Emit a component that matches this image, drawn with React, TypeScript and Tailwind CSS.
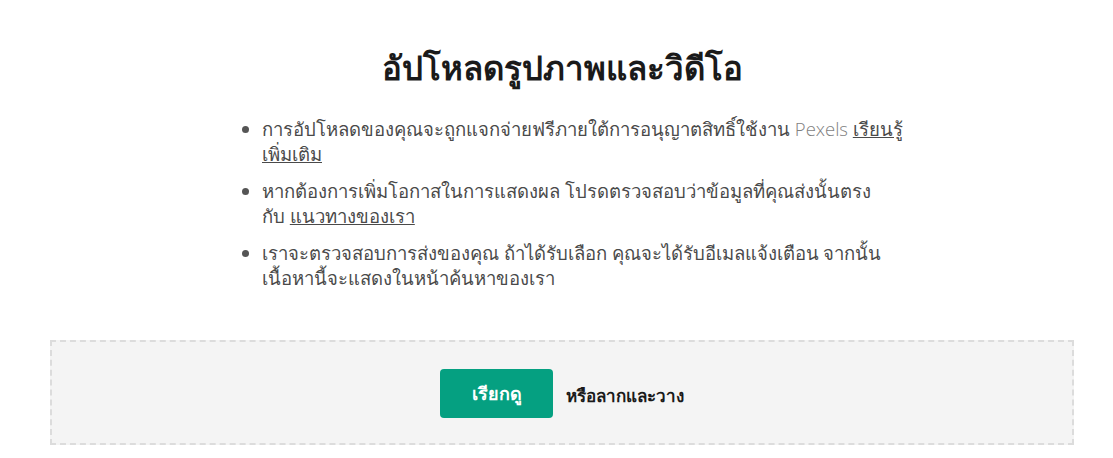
const font = { fontFamily: '"Open Sans", "Noto Sans", "DejaVu Sans", sans-serif' };

export default function App() {
  return (
    <div className="min-h-[458px] bg-white text-[#4a4a4a]" style={font}>
      <div className="ml-[50px] w-[1024px] pt-[44px]">
        <h1 className="text-center text-[33px] font-bold leading-[48px] text-[#1a1a1a]">
          อัปโหลดรูปภาพและวิดีโอ
        </h1>

        <ul className="ml-[192px] mt-[24px] w-[740px] list-disc whitespace-nowrap pl-[20px] text-[18.5px] leading-[25px] marker:text-[#555]">
          <li className="mb-[12px]">
            การอัปโหลดของคุณจะถูกแจกจ่ายฟรีภายใต้การอนุญาตสิทธิ์ใช้งาน{" "}
            <span className="font-light text-[#7f7f7f]">Pexels</span>{" "}
            <a href="#" className="underline">
              เรียนรู้
              <br />
              เพิ่มเติม
            </a>
          </li>
          <li className="mb-[12px]">
            หากต้องการเพิ่มโอกาสในการแสดงผล โปรดตรวจสอบว่าข้อมูลที่คุณส่งนั้นตรง
            <br />
            กับ{" "}
            <a href="#" className="underline">
              แนวทางของเรา
            </a>
          </li>
          <li>
            เราจะตรวจสอบการส่งของคุณ ถ้าได้รับเลือก คุณจะได้รับอีเมลแจ้งเตือน จากนั้น
            <br />
            เนื้อหานี้จะแสดงในหน้าค้นหาของเรา
          </li>
        </ul>

        <div className="mt-[50px] flex h-[105px] items-center justify-center gap-[13px] border-2 border-dashed border-[#dcdcdc] bg-[#f4f4f4] pt-[2px]">
          <button className="h-[49px] w-[113px] rounded-[4px] bg-[#05a081] text-[18px] font-bold text-white">
            เรียกดู
          </button>
          <span className="mt-[4px] text-[17px] font-bold text-[#1a1a1a]">หรือลากและวาง</span>
        </div>
      </div>
    </div>
  );
}
